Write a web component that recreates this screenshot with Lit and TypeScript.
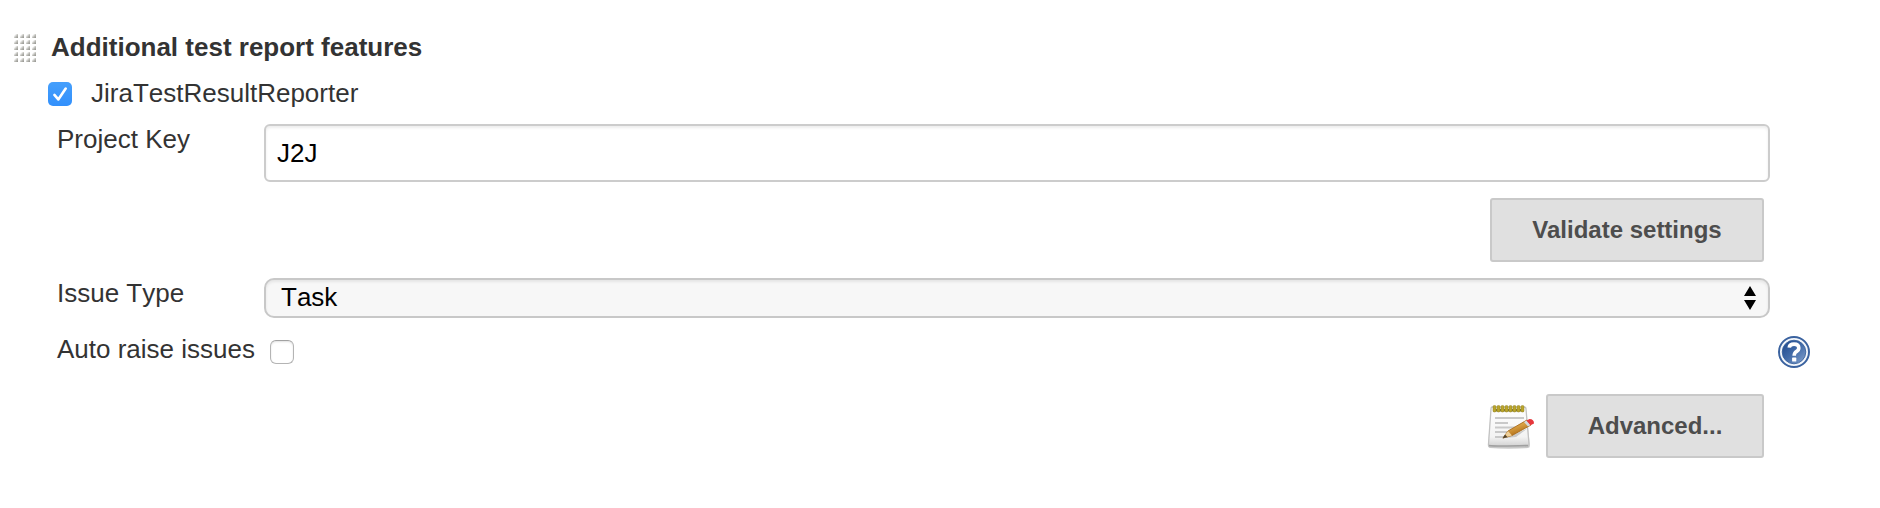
import { LitElement, html, css, svg } from "lit";
import { customElement } from "lit/decorators.js";

@customElement("app-root")
export class AppRoot extends LitElement {
  static styles = css`
    :host {
      display: block;
      box-sizing: border-box;
      width: 1880px;
      height: 508px;
      background: #fff;
      color: #333;
      font: 26px/30px "Liberation Sans", Arial, sans-serif;
      font-kerning: none;
      overflow: hidden;
    }
    * { box-sizing: border-box; }
    svg { display: block; flex: none; }
    .row { display: flex; align-items: flex-start; white-space: nowrap; }
    .head { height: 46px; margin-top: 32px; padding-left: 14px; }
    .head svg { margin-top: 2px; }
    h2 { margin: 0 0 0 13px; font-size: 26px; line-height: 30px; font-weight: 700; }
    .reporter { height: 46px; padding-left: 48px; }
    .reporter svg { margin-top: 4px; }
    .reporter label { margin-left: 19px; }
    .field { padding-left: 57px; }
    .label { width: 207px; height: 30px; flex: none; }
    .key { height: 74px; }
    .key .input {
      width: 1506px;
      height: 58px;
      padding: 12px 11px;
      border: 2px solid #ccc;
      border-radius: 6px;
      box-shadow: inset 0 2px 3px rgba(0, 0, 0, 0.075);
      color: #000;
    }
    .actions { justify-content: flex-end; padding-right: 116px; }
    .validate { height: 80px; }
    .button {
      height: 64px;
      padding: 15px 0;
      border: 2px solid #c9c9c9;
      border-radius: 3px;
      background: #e0e0e0;
      color: #4d4d4d;
      font-size: 24px;
      font-weight: 700;
      font-kerning: normal;
      text-align: center;
    }
    .wide { width: 274px; }
    .narrow { width: 218px; }
    .type { height: 56px; }
    .select {
      display: flex;
      justify-content: space-between;
      width: 1506px;
      height: 40px;
      padding: 2px 12px 0 15px;
      border: 2px solid #c8c8c8;
      border-radius: 10px;
      background: #f7f7f7;
      box-shadow: inset 0 2px 3px rgba(0, 0, 0, 0.075);
      color: #000;
    }
    .select svg { margin-top: 4px; }
    .auto { height: 60px; }
    .auto .label { width: 213px; }
    .box {
      width: 24px;
      height: 24px;
      margin-top: 6px;
      border: 1.5px solid #b4b4b4;
      border-top-color: #a2a2a2;
      border-radius: 6px;
      background: #fff;
      box-shadow: inset 0 1px 2px rgba(0, 0, 0, 0.12);
    }
    .auto .help { margin: 2px 70px 0 auto; }
    .note { margin: 8px 12px 0 0; }
  `;

  private grip() {
    const cells = Array.from({ length: 20 }, (_, i) => [(i % 4) * 6, Math.floor(i / 4) * 6]);
    return html`<svg width="24" height="28" viewBox="0 0 24 28">
      <defs>
        <linearGradient id="dot" x1="0" y1="0" x2="1" y2="1">
          <stop offset="0.2" stop-color="#fff" />
          <stop offset="0.6" stop-color="#b8b8b3" />
          <stop offset="1" stop-color="#8f8f8b" />
        </linearGradient>
      </defs>
      ${cells.map(([x, y]) => svg`<rect x=${x} y=${y} width="4" height="4" fill="url(#dot)"></rect>`)}
    </svg>`;
  }

  private notepad() {
    const rings = Array.from({ length: 8 }, (_, i) => 7 + i * 4);
    return html`<svg class="note" width="48" height="48" viewBox="0 0 48 48">
      <defs>
        <linearGradient id="paper" x1="0" y1="0" x2="0" y2="1">
          <stop offset="0" stop-color="#fff" />
          <stop offset="0.75" stop-color="#f3f3f3" />
          <stop offset="1" stop-color="#cfcfcf" />
        </linearGradient>
        <linearGradient id="wood" x1="0" y1="0" x2="0.55" y2="1">
          <stop offset="0.25" stop-color="#f0bd5c" />
          <stop offset="0.8" stop-color="#b6751d" />
        </linearGradient>
      </defs>
      <path d="M5 7H40L44 44Q44 46 42 46Q22 48 4 46Q2 46 2 43Z" fill="#aaa" opacity=".45" />
      <path d="M6 5H38Q40 5 40 7L43 42Q43 45 41 45H5Q2 45 2.5 42L5 7Q5 5 6 5Z" fill="url(#paper)" stroke="#c2c2c2" stroke-width="1.3" />
      <path d="M3 43.5Q10 44.5 42 43.5" fill="none" stroke="#a0a0a0" stroke-width="1.6" />
      <path d="M7 7H38V9.5H7Z" fill="#817b35" />
      ${rings.map((x) => svg`<rect x=${x} y="3.5" width="3" height="6.5" rx="1.3" fill="#bba52b" stroke="#918020" stroke-width=".5"></rect>`)}
      <path d="M9 16H38M9 21H22M9 25.5H29M9 30H25M9 35H22" stroke="#c9c9c9" stroke-width="1.9" fill="none" />
      <path d="M20 36L30 35L42 26L38 28Z" fill="#777" opacity=".35" />
      <path d="M17 36L22 29L41 18L45 23L26 33.5Z" fill="url(#wood)" stroke="#a76b1d" stroke-width=".9" />
      <path d="M17 36L22 29L26 33.5Z" fill="#efcf98" />
      <path d="M16.5 36.5L19 32.5L21.5 35Z" fill="#51432d" />
      <path d="M38 20L40.5 18.5L44.5 23L42 24.5Z" fill="#d4d9df" />
      <path d="M40.5 18.5L43.5 17Q48 17 48 21.5L44.5 23.2Z" fill="#e6373c" />
    </svg>`;
  }

  render() {
    return html`
      <div class="row head">${this.grip()}<h2>Additional test report features</h2></div>
      <div class="row reporter">
        <svg width="24" height="24" viewBox="0 0 24 24">
          <defs>
            <linearGradient id="blue" x1="0" y1="0" x2="0" y2="1">
              <stop offset="0" stop-color="#459ffc" />
              <stop offset="1" stop-color="#3290fc" />
            </linearGradient>
          </defs>
          <rect width="24" height="24" rx="5" fill="url(#blue)" />
          <path d="M6.4 12.9L10.3 17.4L17.7 6.5" fill="none" stroke="#fff" stroke-width="2.6" stroke-linecap="round" stroke-linejoin="round" />
        </svg>
        <label>JiraTestResultReporter</label>
      </div>
      <div class="row field key"><div class="label">Project Key</div><div class="input">J2J</div></div>
      <div class="row actions validate"><div class="button wide">Validate settings</div></div>
      <div class="row field type">
        <div class="label">Issue Type</div>
        <div class="select">
          <span>Task</span>
          <svg width="12" height="24" viewBox="0 0 12 24">
            <path d="M6 0L12 10H0ZM0 14H12L6 24Z" fill="#000" />
          </svg>
        </div>
      </div>
      <div class="row field auto">
        <div class="label">Auto raise issues</div>
        <div class="box"></div>
        <svg class="help" width="32" height="32" viewBox="0 0 32 32">
          <defs>
            <linearGradient id="disc" x1="0" y1="0" x2="1" y2="1">
              <stop offset="0.2" stop-color="#2a5496" />
              <stop offset="0.5" stop-color="#426ba8" />
              <stop offset="1" stop-color="#86a4cf" />
            </linearGradient>
          </defs>
          <circle cx="16" cy="16" r="15" fill="#f4f7fb" stroke="#3a629f" stroke-width="2" />
          <circle cx="16" cy="16" r="11.8" fill="url(#disc)" stroke="#335d99" stroke-width=".8" />
          <path d="M11.2 11.6Q11.6 8.1 16 8.1Q20.8 8.1 20.8 12Q20.8 14.2 18.4 15.6Q16.2 17 16.2 19.8" fill="none" stroke="#fff" stroke-width="3.6" />
          <rect x="14.1" y="21.6" width="4.2" height="4" rx=".6" fill="#fff" />
        </svg>
      </div>
      <div class="row actions">${this.notepad()}<div class="button narrow">Advanced...</div></div>
    `;
  }
}
